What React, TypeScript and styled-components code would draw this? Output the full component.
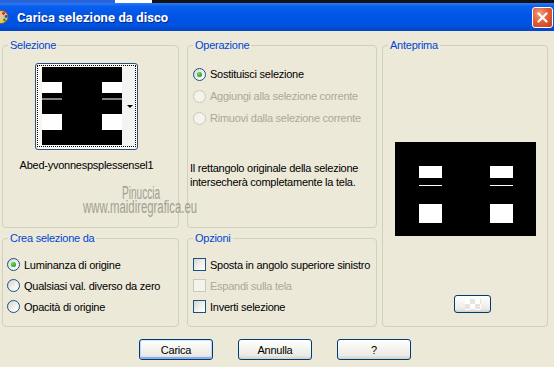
import React from 'react';
import styled, { createGlobalStyle, css } from 'styled-components';

const GlobalStyle = createGlobalStyle`
  html, body {
    margin: 0;
    padding: 0;
  }
  body {
    width: 554px;
    height: 367px;
    overflow: hidden;
    background: #ECE9D8;
    font-family: "Liberation Sans", Arial, sans-serif;
    font-size: 11px;
    letter-spacing: -0.25px;
    color: #000;
  }
`;

const Window = styled.div`
  position: relative;
  width: 554px;
  height: 367px;
  display: flex;
  flex-direction: column;
  background: #ECE9D8;
  overflow: hidden;
`;

const TopStrip = styled.div`
  display: flex;
  height: 3px;
  flex: none;
`;

const StripPart = styled.div<{ $w?: number; $c: string }>`
  background: ${p => p.$c};
  ${p => (p.$w ? `width: ${p.$w}px;` : 'flex: 1;')}
`;

const TitleBar = styled.div`
  height: 28px;
  flex: none;
  display: flex;
  align-items: center;
  padding-right: 1px;
  background: linear-gradient(
    #2C7BF7 0%,
    #0A5FEE 12%,
    #0055E6 45%,
    #0052E0 80%,
    #0044C4 100%
  );
`;

const TitleIcon = styled.svg`
  width: 9px;
  height: 16px;
  flex: none;
`;

const TitleText = styled.span`
  margin-left: 8px;
  flex: 1;
  color: #fff;
  font-family: Roboto, "Liberation Sans", Arial, sans-serif;
  font-weight: 700;
  font-size: 13px;
  letter-spacing: 0.1px;
  text-shadow: 1px 1px 0 #0A2A8A;
`;

const CloseButton = styled.div`
  width: 21px;
  height: 21px;
  box-sizing: border-box;
  margin-top: 1px;
  border: 1px solid #fff;
  border-radius: 3px;
  background: radial-gradient(circle at 35% 30%, #F0A080 0%, #E2603A 45%, #C63C15 100%);
  display: flex;
  align-items: center;
  justify-content: center;
`;

const Body = styled.div`
  padding: 8px 0 0 2px;
  display: grid;
  grid-template-columns: 177px 8px 190px 5px 166px;
  grid-template-rows: 189px 4px 95px;
`;

const Group = styled.fieldset<{ $col: number; $row: string }>`
  grid-column: ${p => p.$col};
  grid-row: ${p => p.$row};
  margin: 0;
  padding: 0;
  min-width: 0;
  border: 1px solid #D0D0BF;
  border-radius: 4px;
  display: flex;
  flex-direction: column;
`;

const Legend = styled.legend`
  margin-left: 5px;
  padding: 0 2px;
  color: #0046D5;
  font-size: 11px;
  line-height: 13px;
`;

const SelContent = styled.div`
  display: flex;
  flex-direction: column;
  align-items: center;
  padding-right: 8px;
`;

const ThumbButton = styled.div`
  margin-top: 11px;
  width: 103px;
  height: 87px;
  box-sizing: border-box;
  padding: 1px 1px 2px 1px;
  border: 1px solid #2A4F82;
  border-radius: 3px;
  background: #F7F6F1;
`;

const FocusRect = styled.div`
  height: 100%;
  box-sizing: border-box;
  border: 1px dotted #000;
  padding: 1px 0 0 4px;
  display: flex;
`;

const DropStrip = styled.div`
  flex: 1;
  background: #F3F3F1;
  display: flex;
  align-items: center;
  justify-content: flex-end;
  padding-right: 2px;
`;

const DropArrow = styled.span`
  width: 0;
  height: 0;
  border-left: 3px solid transparent;
  border-right: 3px solid transparent;
  border-top: 3px solid #000;
`;

const FileName = styled.div`
  margin-top: 9px;
  line-height: 13px;
`;

const OptionList = styled.div<{ $top: number; $rowH: number; $indent: number }>`
  margin-top: ${p => p.$top}px;
  padding-left: ${p => p.$indent}px;
  display: flex;
  flex-direction: column;
  & > * {
    height: ${p => p.$rowH}px;
  }
`;

const Option = styled.label<{ $disabled?: boolean }>`
  display: flex;
  align-items: center;
  gap: 4px;
  color: ${p => (p.$disabled ? '#ACA899' : '#000')};
  white-space: nowrap;
`;

const RadioMark = styled.span<{ $on?: boolean; $disabled?: boolean }>`
  position: relative;
  flex: none;
  width: 13px;
  height: 13px;
  box-sizing: border-box;
  border-radius: 50%;
  border: 1px solid ${p => (p.$disabled ? '#CAC8BB' : '#1C5180')};
  background: ${p =>
    p.$disabled
      ? '#F4F3EC'
      : 'linear-gradient(135deg, #D4D4CE 0%, #EFEFEB 50%, #FFFFFF 100%)'};
  ${p =>
    p.$on &&
    css`
      &::after {
        content: '';
        position: absolute;
        left: 3px;
        top: 3px;
        width: 5px;
        height: 5px;
        border-radius: 50%;
        background: radial-gradient(circle at 40% 35%, #6EE06A 0%, #21A121 70%, #1A8A1A 100%);
      }
    `}
`;

const CheckMark = styled.span<{ $disabled?: boolean }>`
  flex: none;
  width: 13px;
  height: 13px;
  box-sizing: border-box;
  border: 1px solid ${p => (p.$disabled ? '#CAC8BB' : '#1C5180')};
  background: ${p =>
    p.$disabled
      ? '#F4F3EC'
      : 'linear-gradient(135deg, #D4D4CE 0%, #EFEFEB 50%, #FFFFFF 100%)'};
`;

const Note = styled.p`
  margin: 32px 0 0 2px;
  line-height: 14px;
`;

const PreviewContent = styled.div`
  display: flex;
  flex-direction: column;
  align-items: center;
`;

const PreviewCanvas = styled.svg`
  margin-top: 90px;
  display: block;
`;

const SmallButton = styled.div`
  margin-top: 59px;
  margin-left: 15px;
  width: 37px;
  height: 18px;
  box-sizing: border-box;
  border: 1px solid #003C74;
  border-radius: 3px;
  background: linear-gradient(#FFFFFF 0%, #F4F4F0 45%, #ECEBE6 80%, #D6D0C5 100%);
  display: flex;
  align-items: center;
  justify-content: center;
`;

const Checker = styled.span`
  width: 16px;
  height: 11px;
  background-color: #FFFFFF;
  background-image: conic-gradient(#E4E4E0 25%, transparent 0 50%, #E4E4E0 0 75%, transparent 0);
  background-size: 10px 10px;
`;

const Footer = styled.div`
  margin-top: 12px;
  display: flex;
  justify-content: center;
  gap: 25px;
  padding-right: 4px;
`;

const PushButton = styled.button<{ $default?: boolean }>`
  width: 74px;
  height: 21px;
  box-sizing: border-box;
  padding: 0;
  border: 1px solid #003C74;
  border-radius: 3px;
  background: linear-gradient(#FFFFFF 0%, #F5F5F1 40%, #ECEBE6 80%, #D6D0C5 100%);
  font-family: "Liberation Sans", Arial, sans-serif;
  font-size: 11px;
  letter-spacing: -0.25px;
  color: #000;
  ${p =>
    p.$default &&
    css`
      box-shadow: inset 0 1px 0 #CEE7FF, inset 1px 0 0 #BCD4F6, inset -1px 0 0 #BCD4F6,
        inset 0 -2px 0 #89ADE4;
    `}
`;

const Watermark = styled.div<{ $x: number; $y: number; $scale: number }>`
  position: absolute;
  left: ${p => p.$x}px;
  top: ${p => p.$y}px;
  font-size: 18px;
  line-height: 13px;
  letter-spacing: 0;
  color: #A19F94;
  white-space: nowrap;
  transform: scaleX(${p => p.$scale});
  transform-origin: left top;
  pointer-events: none;
`;

export default function App() {
  return (
    <>
      <GlobalStyle />
      <Window>
        <TopStrip>
          <StripPart $w={115} $c="#2A62D8" />
          <StripPart $w={37} $c="#FFFFFF" />
          <StripPart $c="#121212" />
        </TopStrip>
        <TitleBar>
          <TitleIcon viewBox="7 0 9 16">
            <ellipse cx="8" cy="8" rx="7" ry="6.5" fill="#E8C690" stroke="#8A5A22" strokeWidth="1" />
            <circle cx="10.5" cy="4.5" r="1.4" fill="#E02020" />
            <circle cx="13" cy="7.5" r="1.4" fill="#2050E0" />
            <circle cx="11.5" cy="11" r="1.4" fill="#20A020" />
            <circle cx="8.5" cy="12" r="1.2" fill="#F0D020" />
          </TitleIcon>
          <TitleText>Carica selezione da disco</TitleText>
          <CloseButton>
            <svg width="11" height="11" viewBox="0 0 11 11">
              <path d="M1.5 1.5 L9.5 9.5 M9.5 1.5 L1.5 9.5" stroke="#fff" strokeWidth="2.2" strokeLinecap="round" />
            </svg>
          </CloseButton>
        </TitleBar>

        <Body>
          <Group $col={1} $row="1">
            <Legend>Selezione</Legend>
            <SelContent>
              <ThumbButton>
                <FocusRect>
                  <svg width="80" height="78" viewBox="0 0 80 78">
                    <rect width="80" height="78" fill="#000" />
                    <rect x="0" y="15" width="20" height="11" fill="#fff" />
                    <rect x="60" y="15" width="20" height="11" fill="#fff" />
                    <rect x="0" y="31" width="20" height="2" fill="#808080" />
                    <rect x="60" y="31" width="20" height="2" fill="#808080" />
                    <rect x="0" y="47" width="20" height="16" fill="#fff" />
                    <rect x="60" y="47" width="20" height="16" fill="#fff" />
                  </svg>
                  <DropStrip>
                    <DropArrow />
                  </DropStrip>
                </FocusRect>
              </ThumbButton>
              <FileName>Abed-yvonnespsplessensel1</FileName>
            </SelContent>
          </Group>

          <Group $col={3} $row="1">
            <Legend>Operazione</Legend>
            <OptionList $top={11} $rowH={22} $indent={5}>
              <Option>
                <RadioMark $on />
                Sostituisci selezione
              </Option>
              <Option $disabled>
                <RadioMark $disabled />
                Aggiungi alla selezione corrente
              </Option>
              <Option $disabled>
                <RadioMark $disabled />
                Rimuovi dalla selezione corrente
              </Option>
            </OptionList>
            <Note>
              Il rettangolo originale della selezione
              <br />
              intersecherà completamente la tela.
            </Note>
          </Group>

          <Group $col={5} $row="1 / 4">
            <Legend>Anteprima</Legend>
            <PreviewContent>
              <PreviewCanvas width="141" height="94" viewBox="0 0 141 94">
                <rect width="141" height="94" fill="#000" />
                <rect x="24" y="24" width="23" height="12" fill="#fff" />
                <rect x="95" y="24" width="23" height="12" fill="#fff" />
                <rect x="24" y="43" width="23" height="1" fill="#fff" />
                <rect x="95" y="43" width="23" height="1" fill="#fff" />
                <rect x="24" y="62" width="23" height="19" fill="#fff" />
                <rect x="95" y="62" width="23" height="19" fill="#fff" />
              </PreviewCanvas>
              <SmallButton>
                <Checker />
              </SmallButton>
            </PreviewContent>
          </Group>

          <Group $col={1} $row="3">
            <Legend>Crea selezione da</Legend>
            <OptionList $top={9} $rowH={21} $indent={4}>
              <Option>
                <RadioMark $on />
                Luminanza di origine
              </Option>
              <Option>
                <RadioMark />
                Qualsiasi val. diverso da zero
              </Option>
              <Option>
                <RadioMark />
                Opacità di origine
              </Option>
            </OptionList>
          </Group>

          <Group $col={3} $row="3">
            <Legend>Opzioni</Legend>
            <OptionList $top={9} $rowH={21} $indent={5}>
              <Option>
                <CheckMark />
                Sposta in angolo superiore sinistro
              </Option>
              <Option $disabled>
                <CheckMark $disabled />
                Espandi sulla tela
              </Option>
              <Option>
                <CheckMark />
                Inverti selezione
              </Option>
            </OptionList>
          </Group>
        </Body>

        <Footer>
          <PushButton $default>Carica</PushButton>
          <PushButton>Annulla</PushButton>
          <PushButton>?</PushButton>
        </Footer>

        <Watermark $x={122} $y={187} $scale={0.56}>
          Pinuccia
        </Watermark>
        <Watermark $x={83} $y={201} $scale={0.63}>
          www.maidiregrafica.eu
        </Watermark>
      </Window>
    </>
  );
}
